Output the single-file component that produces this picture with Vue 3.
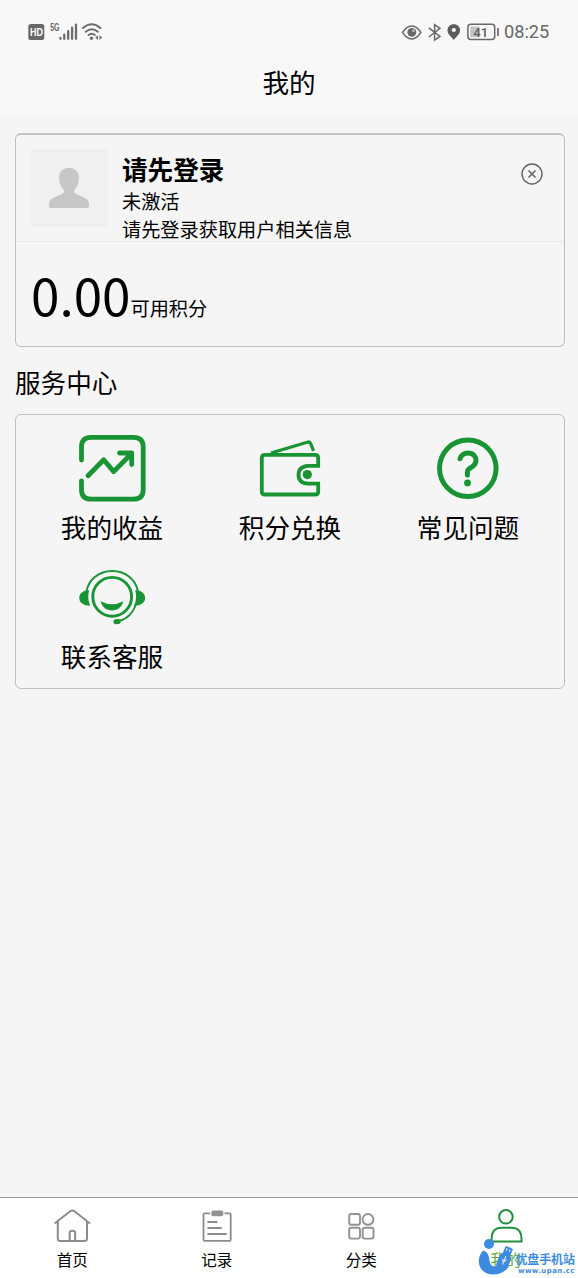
<script setup>
const tabs = [
  { id: 'home', label: '首页' },
  { id: 'log', label: '记录' },
  { id: 'category', label: '分类' },
  { id: 'mine', label: '我的' }
]
const services = [
  { id: 'income', label: '我的收益' },
  { id: 'wallet', label: '积分兑换' },
  { id: 'help', label: '常见问题' },
  { id: 'support', label: '联系客服' }
]
</script>

<template>
  <div class="screen">
    <header class="header">
      <div class="status">
        <svg class="status-left" width="80" height="24" viewBox="26 20 80 24">
          <rect x="28.3" y="24" width="16" height="16" rx="2.6" fill="#686868" />
          <text class="hd" x="29.9" y="35.7" textLength="13" lengthAdjust="spacingAndGlyphs">HD</text>
          <text class="net" x="50.2" y="31" textLength="9.4" lengthAdjust="spacingAndGlyphs">5G</text>
          <g stroke="#6c6c6c" stroke-width="2.3" stroke-linecap="round">
            <path d="M60.4 37.9V38.8M64.3 34.6V38.8M68.2 31.2V38.8M72.1 27.7V38.8M76 24.6V38.8" />
          </g>
          <g fill="none" stroke="#6c6c6c" stroke-width="2" stroke-linecap="round">
            <path d="M83 28Q91.8 20.6 100.4 28M85.7 31.8Q91.8 26.8 97.8 31.8M88.6 35Q91.8 32.4 94.8 35" />
          </g>
          <circle cx="91.5" cy="38.2" r="1.7" fill="#6c6c6c" />
          <path d="M98 35.3V39.9L95.2 37.6ZM99.4 35.3V39.9L102.2 37.6Z" fill="#6c6c6c" />
        </svg>
        <div class="status-right">
          <svg width="102" height="24" viewBox="400 20 102 24">
            <path d="M402.5 32.4Q406.5 25.9 411.7 25.9T420.9 32.4Q416.9 38.9 411.7 38.9T402.5 32.4Z" fill="none" stroke="#686868" stroke-width="1.5" />
            <circle cx="411.8" cy="32.3" r="4.4" fill="#686868" />
            <circle cx="413.4" cy="30.8" r="1.2" fill="#ccc" />
            <path d="M428.8 27.8L440 36.5L434.6 40V24.6L440 28.3L428.8 37" fill="none" stroke="#686868" stroke-width="1.5" />
            <path d="M453.8 24.2C450 24.2 447.5 26.9 447.5 30.2C447.5 34 450.5 35.8 453.8 40C457.1 35.8 460.1 34 460.1 30.2C460.1 26.9 457.6 24.2 453.8 24.2Z" fill="#5d5d5d" />
            <circle cx="453.8" cy="30" r="2.1" fill="#f8f8f8" />
            <rect x="467.9" y="24.3" width="26.8" height="15.2" rx="3" fill="none" stroke="#686868" stroke-width="1.5" />
            <rect x="470.2" y="26.6" width="9.4" height="10.6" rx="1" fill="#c4c4c4" />
            <text class="level" x="473.2" y="36.5" textLength="15" lengthAdjust="spacingAndGlyphs">41</text>
            <path d="M498 28V36" stroke="#686868" stroke-width="1.7" />
          </svg>
          <span class="time">08:25</span>
        </div>
      </div>
      <h1 class="title">我的</h1>
    </header>

    <main class="main">
      <section class="card profile">
        <div class="user">
          <div class="avatar">
            <svg width="42" height="42" viewBox="48 167 42 42">
              <path d="M69 167.8C74.8 167.8 79.2 172 79 178C78.9 183.5 76.8 187.2 74.2 190.2C73.6 193.4 76.3 194.2 79.5 195.4C85 197.7 89 199.5 89 203.5V206.5Q89 208 87.5 208H50.5Q49 208 49 206.5V203.5C49 199.5 53 197.7 58.5 195.4C61.7 194.2 64.4 193.4 63.8 190.2C61.2 187.2 59.1 183.5 59 178C58.8 172 63.2 167.8 69 167.8Z" fill="#c7c7c7" />
            </svg>
          </div>
          <div class="info">
            <strong class="name">请先登录</strong>
            <span class="note">未激活</span>
            <span class="note">请先登录获取用户相关信息</span>
          </div>
          <svg class="close" width="24" height="24" viewBox="0 0 24 24" fill="none" stroke="#626262">
            <circle cx="12" cy="12" r="10" stroke-width="1.4" />
            <path d="M8.5 8.5L15.5 15.5M15.5 8.5L8.5 15.5" stroke-width="1.5" />
          </svg>
        </div>
        <div class="points"><span class="amount">0.00</span><span class="unit">可用积分</span></div>
      </section>

      <h2 class="section-title">服务中心</h2>

      <section class="card services">
        <div v-for="s in services" :key="s.id" class="service">
          <svg v-if="s.id === 'income'" width="74" height="74" viewBox="75 431 74 74" fill="none" stroke="#189434" stroke-width="4.8" stroke-linecap="round" stroke-linejoin="round">
            <path d="M81.5 460V447Q81.5 437.4 91 437.4H133.5Q143.2 437.4 143.2 447V489.5Q143.2 499.2 133.5 499.2H91Q81.5 499.2 81.5 489.5V481" />
            <path d="M88 475.8L103.7 459.7L113.7 471.6L131.3 453.8M119.5 453H131.7V464.5" />
          </svg>
          <svg v-else-if="s.id === 'wallet'" width="74" height="74" viewBox="253 431 74 74" fill="none" stroke="#189434" stroke-width="3.8">
            <path d="M318.2 467.6V458Q318.2 454.9 315.1 454.9H265Q261.8 454.9 261.8 458V491.4Q261.8 494.5 265 494.5H315.1Q318.2 494.5 318.2 491.4V482.2M320 465.8H308.2Q298.5 466.5 298.5 474.7Q298.5 483 308.2 483.7H320" />
            <path d="M271 453L307.2 442.2Q309.8 441.4 310.7 443.7L313.5 450.8" stroke-width="3.2" />
            <circle cx="307.3" cy="474.6" r="4.6" fill="#189434" stroke="none" />
          </svg>
          <svg v-else-if="s.id === 'help'" width="74" height="74" viewBox="431 431 74 74" fill="none" stroke="#189434" stroke-width="5">
            <circle cx="467.8" cy="468.3" r="28.3" />
            <path d="M460 458.8Q462 452.9 468 452.9C473.5 452.9 476 457 476 460.3C476 465.8 471.5 467.2 469 468.8Q467.4 470 467.4 472V474.9" stroke-linecap="round" />
            <circle cx="467.5" cy="482.9" r="3.4" fill="#189434" stroke="none" />
          </svg>
          <svg v-else width="74" height="74" viewBox="75 560 74 74" fill="none" stroke="#189434">
            <circle cx="112.2" cy="596.8" r="19.4" stroke-width="2.9" />
            <path d="M86.4 592C88.2 580 98.5 571.1 112.2 571.1C126 571.1 136.1 580 138 592" stroke-width="2" />
            <path d="M89.2 590.3C83 590.4 79.3 593.3 79.3 598C79.3 602.6 83.4 605.6 90.2 605.8C88 600.5 87.7 595.4 89.2 590.3ZM135.2 590.3C141.4 590.4 145.1 593.3 145.1 598C145.1 602.6 141 605.6 134.2 605.8C136.4 600.5 136.7 595.4 135.2 590.3Z" fill="#189434" stroke="none" />
            <path d="M100.7 601.3Q112 607.3 123.3 601.3C121.8 607.4 117.5 610.5 112 610.5C106.5 610.5 102.2 607.4 100.7 601.3Z" fill="#189434" stroke="none" />
            <path d="M136.2 603.5Q131.5 618 119 621" stroke-width="1.8" />
            <rect x="113.5" y="619.2" width="7.2" height="5" rx="2.5" fill="#189434" stroke="none" transform="rotate(-8 117 622)" />
          </svg>
          <span class="service-label">{{ s.label }}</span>
        </div>
      </section>
    </main>

    <nav class="tabbar">
      <div v-for="t in tabs" :key="t.id" class="tab" :class="{ active: t.id === 'mine' }">
        <svg v-if="t.id === 'home'" width="40" height="40" viewBox="52 1206 40 40" fill="none" stroke="#8c8c8c" stroke-width="2" stroke-linejoin="round" stroke-linecap="round">
          <path d="M55.2 1223L70.2 1211.2Q72.3 1209.6 74.4 1211.2L89.4 1223M57.8 1221.5V1238.5Q57.8 1241 60.4 1241H84.4Q87 1241 87 1238.5V1221.5M69.7 1240.5V1233Q69.7 1230.8 72.4 1230.8Q75.1 1230.8 75.1 1233V1240.5" />
        </svg>
        <svg v-else-if="t.id === 'log'" width="40" height="40" viewBox="196.5 1206 40 40" fill="none" stroke="#8c8c8c" stroke-width="1.8">
          <path d="M209.5 1213.3H204.2Q203 1213.3 203 1214.5V1239.7Q203 1240.9 204.2 1240.9H229Q230.2 1240.9 230.2 1239.7V1214.5Q230.2 1213.3 229 1213.3H224M207 1222H217M207 1228H221.2M207 1234H226.2" />
          <rect x="210.8" y="1210.6" width="12" height="5.6" rx="2" fill="#929292" stroke="none" />
        </svg>
        <svg v-else-if="t.id === 'category'" width="40" height="40" viewBox="341 1206 40 40" fill="none" stroke="#929292" stroke-width="1.9">
          <rect x="349.2" y="1214" width="10.8" height="10.8" rx="2" />
          <circle cx="368" cy="1219.4" r="5.4" />
          <rect x="349.2" y="1227.8" width="10.8" height="10.8" rx="2" />
          <rect x="362.7" y="1227.8" width="10.8" height="10.8" rx="2" />
        </svg>
        <svg v-else width="40" height="40" viewBox="485.5 1206 40 40" fill="none" stroke="#238f3c" stroke-width="2">
          <circle cx="505.4" cy="1216.8" r="6.8" />
          <path d="M491.2 1241.5Q490 1227.7 501 1227.7H511Q522 1227.7 521 1241.5Z" />
        </svg>
        <span class="tab-label">{{ t.label }}</span>
      </div>
    </nav>

    <div class="watermark">
      <svg width="42" height="42" viewBox="476 1236 42 42">
        <circle cx="489" cy="1244" r="5" fill="#3d8be0" />
        <path d="M483 1250.5C475 1259 478.5 1274.5 493 1274.5C502 1274.5 507 1270 509 1265L500 1263C497 1268.5 490.5 1267.5 489.5 1261C488.8 1256 488.5 1252 483 1250.5Z" fill="#3d8be0" />
        <g transform="rotate(22 505 1259)">
          <rect x="498.7" y="1253" width="12" height="18" rx="5" fill="#3d8be0" />
          <rect x="500.7" y="1246.5" width="8" height="7.5" rx="1" fill="#3d8be0" />
          <path d="M503 1248.5V1250.5M506.3 1248.5V1250.5" stroke="#fff" stroke-width="1.2" />
          <path d="M504.7 1256V1265M502.7 1260L504.7 1262.5L506.7 1259" fill="none" stroke="#dcebfb" stroke-width="1.1" />
        </g>
      </svg>
      <svg class="wm-text" width="62" height="32" viewBox="515 1246 62 32">
        <text class="wm-name" x="515.5" y="1264.3" textLength="59.5">优盘手机站</text>
        <text class="wm-url" x="518" y="1272.8" textLength="56.5">www.upan.cc</text>
      </svg>
    </div>
  </div>
</template>

<style>
body {
  margin: 0;
  background: #f5f5f5;
}
</style>

<style scoped>
.screen {
  position: relative;
  display: flex;
  flex-direction: column;
  width: 578px;
  height: 1278px;
  overflow: hidden;
  background: #f5f5f5;
  color: #000;
  font-family: "Noto Sans CJK SC", sans-serif;
}
svg { display: block; flex: none; overflow: visible; }
.header {
  height: 117px;
  background: #f8f8f8;
}
.status {
  display: flex;
  justify-content: space-between;
  height: 24px;
  padding: 20px 26px 0 26px;
}
.status-right { display: flex; align-items: center; }
.time {
  width: 48px;
  margin-left: 2px;
  font: 18.2px/24px Roboto, sans-serif;
  color: #686868;
  white-space: nowrap;
}
.hd { font: 700 10.5px "Liberation Sans", sans-serif; fill: #fff; }
.net { font: 700 10.6px "Liberation Sans", sans-serif; fill: #6c6c6c; }
.level { font: 500 13px Roboto, sans-serif; fill: #5d5d5d; }
.title {
  margin: 19px 0 0;
  font-size: 26.6px;
  font-weight: 400;
  line-height: 38px;
  text-align: center;
}
.main { flex: 1; padding: 16px 13px 0 15px; }
.card {
  box-sizing: border-box;
  border: 1px solid #c0c0c0;
  border-radius: 6px;
}
.profile {
  height: 214px;
  border-top: 2px solid #c4c4c4;
}
.user {
  display: flex;
  height: 106px;
  border-bottom: 1px solid #e8e8e8;
}
.avatar {
  display: flex;
  align-items: center;
  justify-content: center;
  width: 78px;
  height: 78px;
  margin: 14px 14px 0 14px;
  background: #f0f0f0;
}
.info {
  display: flex;
  flex: 1;
  flex-direction: column;
  padding-top: 15px;
}
.name { font-size: 25.6px; line-height: 37px; }
.note { font-size: 19.2px; line-height: 28px; }
.close { margin: 27px 20px 0 0; }
.points {
  display: flex;
  align-items: baseline;
  padding: 14px 0 0 15px;
}
.amount { font-size: 51.2px; line-height: 76px; }
.unit { font-size: 19.2px; }
.section-title {
  margin: 16px 0 14px;
  font-size: 25.6px;
  font-weight: 400;
  line-height: 37px;
}
.services {
  display: grid;
  grid-template-columns: repeat(3, 178px);
  grid-auto-rows: 129px;
  height: 275px;
  padding: 16px 7px 0;
}
.service {
  display: flex;
  flex-direction: column;
  align-items: center;
}
.service-label { margin-top: 3px; font-size: 25.6px; line-height: 37px; }
.tabbar {
  display: flex;
  box-sizing: border-box;
  height: 81px;
  border-top: 1px solid #999;
  background: #fff;
}
.tab {
  display: flex;
  flex: 1;
  flex-direction: column;
  align-items: center;
  padding-top: 8px;
}
.tab-label { margin-top: 1px; font-size: 15.6px; line-height: 24px; }
.active .tab-label { color: #5fae3d; }
.watermark {
  position: absolute;
  right: 1px;
  bottom: 0;
  display: flex;
  align-items: flex-end;
}
.wm-text { margin-left: -3px; }
.wm-name { font: 700 12px "Noto Sans CJK SC", sans-serif; fill: #3d8be0; }
.wm-url { font: 700 7px "DejaVu Sans", sans-serif; fill: #3d8be0; }
</style>
